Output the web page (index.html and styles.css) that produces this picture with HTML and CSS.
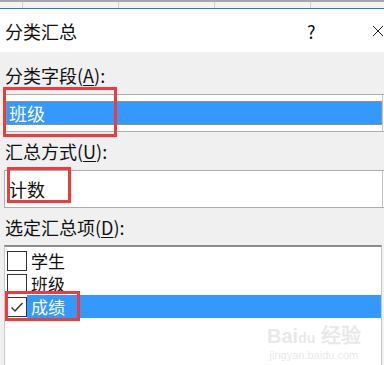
FILE: index.html
```html
<!DOCTYPE html>
<html lang="zh-CN">

<head>
    <meta charset="UTF-8">
    <meta name="viewport" content="width=device-width, initial-scale=1.0">
    <title>分类汇总</title>
    <link rel="stylesheet" href="styles.css">
</head>

<body>
    <div class="sheet-strip">
        <span class="col"></span>
        <span class="col"></span>
        <span class="col"></span>
        <span class="col"></span>
        <span class="col"></span>
    </div>

    <div class="dialog">
        <div class="titlebar">
            <span class="title">分类汇总</span>
            <span class="help">?</span>
            <svg class="close" width="12" height="12" viewBox="0 0 12 12">
                <path d="M1 1 L11 11 M11 1 L1 11" stroke="#222" stroke-width="1" fill="none" />
            </svg>
        </div>

        <div class="body">
            <div class="label">分类字段(<u>A</u>):</div>
            <div class="combo">
                <div class="combo-value selected">班级</div>
                <div class="combo-btn"></div>
                <div class="mark mark-a"></div>
            </div>

            <div class="label">汇总方式(<u>U</u>):</div>
            <div class="combo">
                <div class="combo-value">计数</div>
                <div class="combo-btn"></div>
                <div class="mark mark-b"></div>
            </div>

            <div class="label">选定汇总项(<u>D</u>):</div>
            <div class="list">
                <div class="row">
                    <span class="check"></span>
                    <span class="item">学生</span>
                </div>
                <div class="row">
                    <span class="check"></span>
                    <span class="item">班级</span>
                </div>
                <div class="row">
                    <span class="check">
                        <svg width="18" height="18" viewBox="0 0 18 18">
                            <path d="M3.5 9.5 L7 13 L14.5 5" stroke="#333" stroke-width="1.4" fill="none" />
                        </svg>
                    </span>
                    <span class="item selected">成绩</span>
                </div>
                <div class="mark mark-c"></div>

                <div class="watermark">
                    <div class="wm-logo">Bai<span class="wm-du">du</span> 经验</div>
                    <div class="wm-url">jingyan.baidu.com</div>
                </div>
            </div>
        </div>
    </div>
</body>

</html>
```

FILE: styles.css
```css
body {
    margin: 0;
    width: 384px;
    height: 365px;
    overflow: hidden;
    font-family: "Noto Sans CJK SC", "Noto Sans", sans-serif;
    color: #111;
    background: #f0f0f0;
}

.sheet-strip {
    height: 6px;
    border-top: 2px solid #a6a6a6;
    background: #f3f3f3;
    display: flex;
}

.sheet-strip .col {
    width: 95px;
    border-right: 1px solid #d0d0d0;
    flex-shrink: 0;
}

.sheet-strip .col:first-child {
    width: 22px;
}

.dialog {
    border-top: 1px solid #2b7bd4;
    width: 384px;
    overflow: hidden;
}

.titlebar {
    height: 43px;
    background: #fff;
    display: flex;
    align-items: center;
    padding-left: 5px;
    font-size: 18px;
}

.title {
    width: 306px;
}

.help {
    width: 66px;
    font-size: 18px;
}

.close {
    margin-top: 1px;
    flex-shrink: 0;
}

.body {
    padding: 11px 0 0 4px;
    height: 320px;
}

.label {
    font-size: 18px;
    line-height: 24px;
    height: 24px;
    padding-left: 1px;
}

.label u {
    text-decoration-thickness: 1px;
    text-underline-offset: 2px;
}

.combo {
    position: relative;
    height: 36px;
    width: 400px;
    margin: 7px 0 7px;
    border: 1px solid #adadad;
    background: #fff;
    display: flex;
    align-items: center;
    padding-left: 1px;
}

.combo-value {
    width: 376px;
    height: 24px;
    line-height: 24px;
    font-size: 18px;
    padding-left: 3px;
    box-sizing: border-box;
    flex-shrink: 0;
}

.combo-value.selected {
    background: #3399ff;
    color: #fff;
    outline: 1px dotted #d98a3a;
    outline-offset: -1px;
}

.combo-btn {
    height: 36px;
    width: 20px;
    border-left: 1px solid #c4c4c4;
    flex-shrink: 0;
}

.mark {
    position: absolute;
    border: 3px solid #ef3b3b;
    box-sizing: border-box;
}

.mark-a {
    left: -2px;
    top: -8px;
    width: 114px;
    height: 50px;
}

.mark-b {
    left: 2px;
    top: -4px;
    width: 64px;
    height: 36px;
}

.list {
    position: relative;
    margin-top: 6px;
    height: 130px;
    border-top: 2px solid #8c8c8c;
    border-left: 1px solid #c8c8c8;
    border-right: 1px solid #c8c8c8;
    width: 376px;
    background: #fff;
    padding-top: 2px;
}

.row {
    height: 23px;
    display: flex;
    align-items: center;
}

.check {
    width: 18px;
    height: 18px;
    border: 1px solid #333;
    background: #fff;
    margin-left: 2px;
    flex-shrink: 0;
}

.check svg {
    display: block;
}

.item {
    font-size: 17px;
    line-height: 23px;
    height: 23px;
    padding-left: 4px;
    flex: 1;
}

.item.selected {
    background: #3399ff;
    color: #fff;
}

.mark-c {
    left: 0;
    top: 44px;
    width: 75px;
    height: 30px;
}

.watermark {
    position: absolute;
    left: 262px;
    top: 78px;
    color: rgba(190, 190, 190, 0.35);
    font-family: "Liberation Sans", sans-serif;
    text-align: center;
}

.wm-logo {
    font-size: 20px;
    font-weight: bold;
    line-height: 22px;
}

.wm-du {
    font-size: 14px;
}

.wm-url {
    font-size: 11px;
    line-height: 12px;
}
```
